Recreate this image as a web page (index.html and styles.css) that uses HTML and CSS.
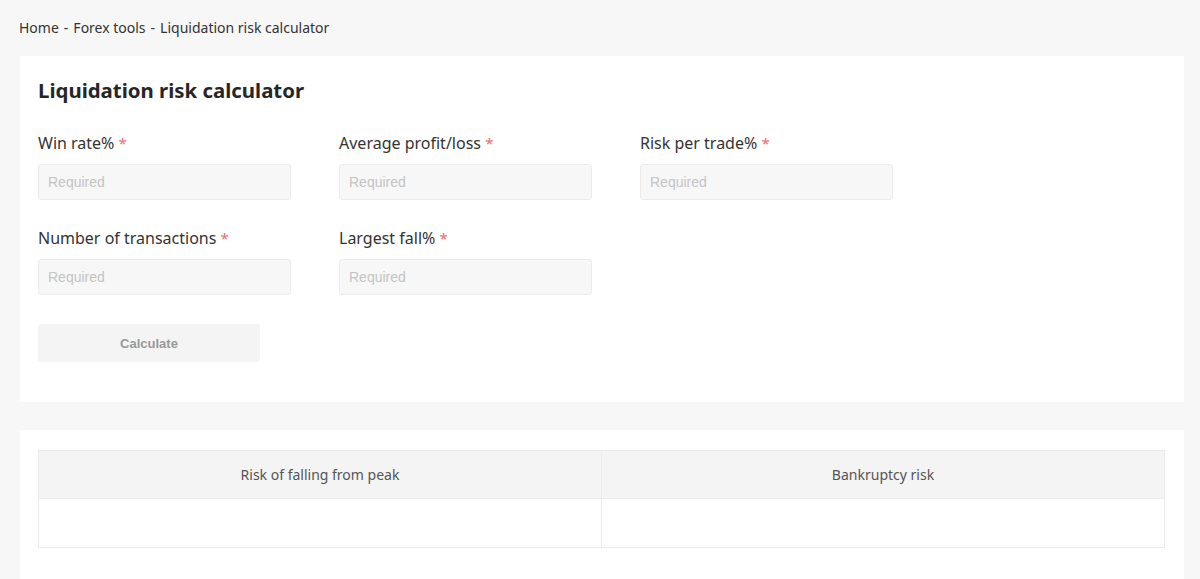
FILE: index.html
```html
<!DOCTYPE html>
<html lang="en">
<head>
<meta charset="utf-8">
<title>Liquidation risk calculator</title>
<link rel="stylesheet" href="styles.css">
</head>
<body>
<div class="page">
  <nav class="crumbs">
    <span>Home</span><span class="sep">-</span><span>Forex tools</span><span class="sep">-</span><span>Liquidation risk calculator</span>
  </nav>

  <section class="card form-card">
    <h1 class="title">Liquidation risk calculator</h1>
    <div class="grid">
      <div class="field">
        <label class="label">Win rate% <span class="req">*</span></label>
        <input class="input" placeholder="Required">
      </div>
      <div class="field">
        <label class="label">Average profit/loss <span class="req">*</span></label>
        <input class="input" placeholder="Required">
      </div>
      <div class="field">
        <label class="label">Risk per trade% <span class="req">*</span></label>
        <input class="input" placeholder="Required">
      </div>
      <div class="field">
        <label class="label">Number of transactions <span class="req">*</span></label>
        <input class="input" placeholder="Required">
      </div>
      <div class="field">
        <label class="label">Largest fall% <span class="req">*</span></label>
        <input class="input" placeholder="Required">
      </div>
    </div>
    <button class="btn" type="button">Calculate</button>
  </section>

  <section class="card result-card">
    <table class="table">
      <thead>
        <tr><th>Risk of falling from peak</th><th>Bankruptcy risk</th></tr>
      </thead>
      <tbody>
        <tr><td></td><td></td></tr>
      </tbody>
    </table>
  </section>
</div>
</body>
</html>
```

FILE: styles.css
```css
* { box-sizing: border-box; }
html, body {
  margin: 0;
  padding: 0;
  background: #f7f7f7;
  font-family: "Noto Sans", "Open Sans", sans-serif;
  color: #333;
}
.page {
  padding: 18px 16px 0 20px;
}
.crumbs {
  font-size: 14px;
  line-height: 20px;
  color: #333;
  margin: 0 0 18px -1px;
  display: flex;
}
.crumbs .sep {
  margin: 0 5px;
}
.card {
  background: #fff;
  padding: 20px 19px 40px 18px;
}
.form-card {
  margin-bottom: 28px;
}
.title {
  margin: 0 0 28px 0;
  font-size: 20.4px;
  line-height: 28px;
  font-weight: 700;
  color: #262626;
}
.grid {
  display: grid;
  grid-template-columns: repeat(3, 253px);
  column-gap: 48px;
  row-gap: 27px;
}
.field {
  display: flex;
  flex-direction: column;
}
.label {
  font-size: 16px;
  line-height: 22px;
  color: #333;
  margin-bottom: 10px;
}
.req {
  color: #f06b6b;
  font-size: 15px;
}
.input {
  height: 36px;
  width: 253px;
  border: 1px solid #ececec;
  border-radius: 3px;
  background: #f7f7f7;
  padding: 0 9px;
  font-family: "Liberation Sans", Arial, sans-serif;
  font-size: 14px;
  outline: none;
}
.input::placeholder {
  color: #c4c4c4;
}
.btn {
  margin-top: 29px;
  width: 222px;
  height: 38px;
  border: none;
  border-radius: 3px;
  background: #f4f4f4;
  color: #999;
  font-family: "Liberation Sans", Arial, sans-serif;
  font-size: 13px;
  font-weight: 700;
  display: block;
}
.result-card {
  padding: 20px 19px 40px 18px;
}
.table {
  width: 100%;
  border-collapse: collapse;
  border: 1px solid #ececec;
  table-layout: fixed;
}
.table th {
  background: #f4f4f4;
  height: 48px;
  font-weight: 400;
  font-size: 14px;
  color: #555;
  border-right: 1px solid #ececec;
  border-bottom: 1px solid #ececec;
}
.table td {
  height: 49px;
  border-right: 1px solid #ececec;
}
```
